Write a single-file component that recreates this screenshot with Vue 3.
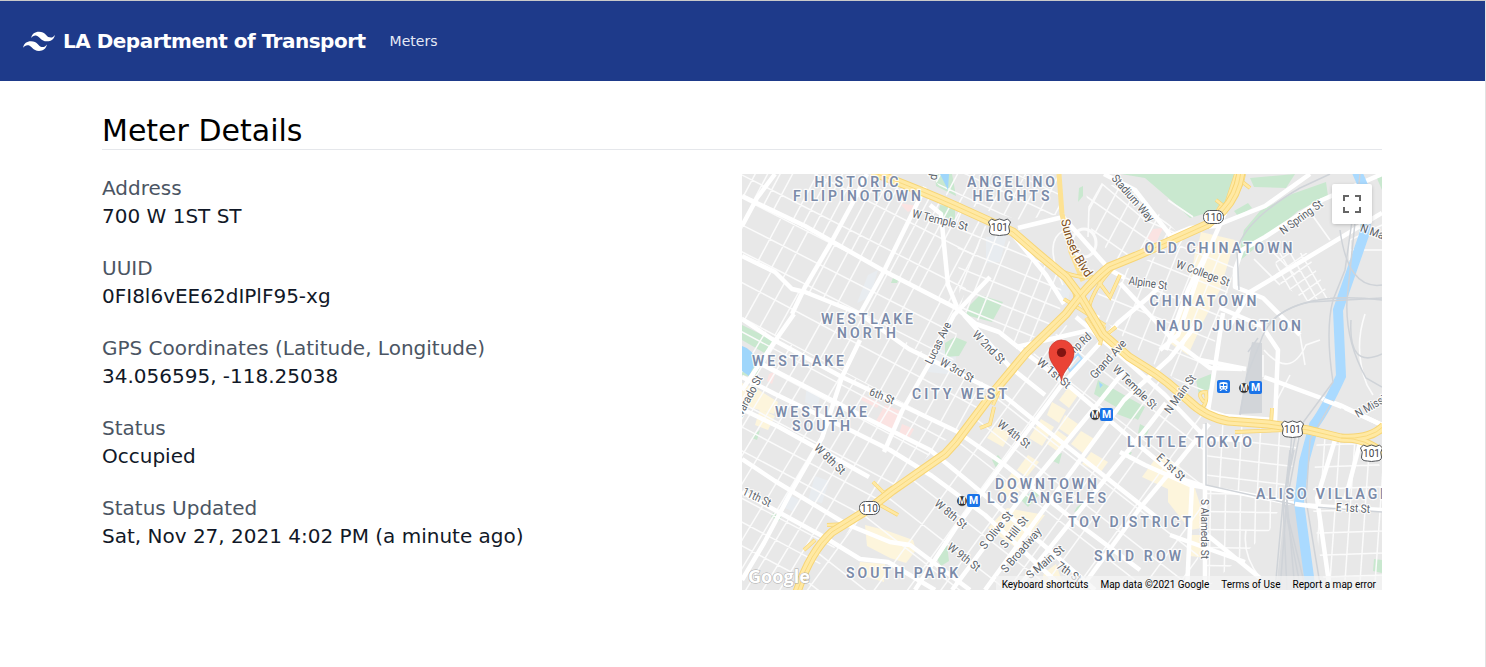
<script setup>
const details = [
  ['Address', '700 W 1ST ST'],
  ['UUID', '0FI8l6vEE62dIPlF95-xg'],
  ['GPS Coordinates (Latitude, Longitude)', '34.056595, -118.25038'],
  ['Status', 'Occupied'],
  ['Status Updated', 'Sat, Nov 27, 2021 4:02 PM (a minute ago)'],
]

// Parallel side streets around (cx, cy) at a given heading; skip leaves gaps in the grid.
function streets(cx, cy, angle, gap, count, len, skip = 0) {
  const a = (angle * Math.PI) / 180
  const dx = Math.cos(a), dy = Math.sin(a)
  let d = ''
  for (let i = -count; i <= count; i++) {
    if (skip && Math.abs(i * 7 + 3) % skip === 0) continue
    const x = cx - dy * gap * i, y = cy + dx * gap * i
    d += `M${(x - dx * len).toFixed(1)} ${(y - dy * len).toFixed(1)}L${(x + dx * len).toFixed(1)} ${(y + dy * len).toFixed(1)}`
  }
  return d
}

const zones = [
  { id: 'nw', shape: '742,174 872,174 956,208 985,225 960,308 742,197', lines: [[850, 230, 118, 11, 18, 200, 5], [850, 230, 27, 34, 7, 200, 0]] },
  { id: 'w', shape: '742,197 960,308 952,372 860,314 805,292 742,256', lines: [[850, 280, 118, 15, 13, 200, 4], [850, 280, 27, 24, 5, 200, 0]] },
  { id: 'wl', shape: '742,256 805,292 860,314 956,372 996,387 956,431 742,319', lines: [[850, 340, 119, 17, 14, 220, 4], [850, 340, 28, 31, 5, 220, 0]] },
  { id: 'sw', shape: '742,319 956,431 892,489 869,509 797,590 742,590', lines: [[830, 450, 121, 14.5, 14, 260, 6], [830, 450, 28, 21, 10, 220, 4]] },
  { id: 'en', shape: '956,207 1062,275 1060,314 1020,350 960,308', lines: [[1000, 265, 112, 14, 8, 100, 4], [1000, 265, 22, 18, 6, 100, 0]] },
  { id: 'an', shape: '930,174 1060,174 1062,214 1020,220 950,200', lines: [[1000, 190, 118, 15, 8, 90, 0], [1000, 190, 25, 21, 4, 90, 0]] },
  { id: 'ch', shape: '1085,185 1130,185 1190,245 1120,262 1092,235', lines: [[1120, 220, 118, 16, 6, 90, 0], [1120, 220, 35, 24, 5, 90, 0]] },
  { id: 'ct', shape: '1100,280 1190,242 1240,250 1218,325 1205,400 1155,365 1095,312', lines: [[1180, 300, 112, 20, 8, 160, 0], [1180, 300, 22, 25, 8, 160, 0]] },
  { id: 'sp', shape: '1276,253 1307,253 1330,298 1310,303 1275,280', lines: [[1300, 270, 60, 9, 8, 70, 0], [1300, 270, 145, 10, 5, 70, 0]] },
  { id: 'dt', shape: '1066,325 1130,357 1208,417 1206,485 1195,590 800,590 815,550 869,509 945,452 996,387', lines: [[1050, 440, 126, 27, 11, 300, 4], [1050, 440, 38, 29, 11, 300, 4]] },
  { id: 'la', shape: '1208,424 1300,432 1285,502 1206,485', lines: [[1240, 460, 93, 19, 5, 80, 0], [1240, 460, 7, 19, 4, 80, 0]] },
  { id: 'ar', shape: '1205,488 1282,502 1270,530 1205,590', lines: [[1240, 530, 91, 15, 4, 100, 0], [1240, 530, 1, 18, 5, 80, 0]] },
  { id: 'al', shape: '1317,438 1370,446 1382,470 1382,590 1325,590 1312,502', lines: [[1350, 510, 94, 15, 5, 120, 0], [1350, 510, 358, 22, 5, 80, 0]] },
]
for (const z of zones) z.d = z.lines.map(l => streets(...l)).join('')

const parks = [
  '742,325 773,340 768,355 742,340', '742,348 760,365 757,378 742,375',
  '970,305 980,295 1003,302 992,322 966,315', '945,343 955,337 967,342 959,356 945,357',
  '940,205 955,207 955,220 938,215', '935,174 952,174 956,196 936,186',
  '1098,380 1145,407 1138,420 1094,394', '1125,401 1142,409 1133,420 1117,414',
  '1121,174 1242,174 1230,205 1210,212 1190,218 1173,202 1145,178',
  '1250,178 1295,174 1286,188 1254,187', '1326,182 1328,196 1298,211 1254,249 1237,263 1244,230 1260,211 1292,194',
  '1234,211 1248,203 1252,208 1238,216', '1079,188 1083,186 1083,196 1078,202',
  '1196,380 1211,374 1211,388 1199,395', '1021,500 1036,488 1041,493 1028,507',
  '992,460 998,455 1002,460 996,468', '1055,456 1062,453 1059,464 1053,461',
  '937,559 947,545 949,561 941,566', '773,513 781,517 779,521 771,517', '753,435 760,430 757,440 752,438',
  '893,278 899,279 897,283 891,283', '1374,559 1382,560 1382,573 1373,571', '1140,424 1149,429 1146,437 1138,433',
  '1077,507 1086,500 1080,510 1074,512', '1123,453 1132,452 1128,459', '1376,176 1382,176 1382,190',
]
const sand = [
  '1068,388 1078,395 1069,408 1059,400', '1052,402 1066,410 1059,423 1047,415', '1041,419 1054,427 1042,446 1029,438',
  '1065,415 1078,424 1070,436 1058,428', '1057,430 1068,438 1057,451 1046,443', '995,427 1011,433 1003,447 987,438',
  '1028,455 1039,462 1027,477 1017,470', '1081,431 1096,440 1084,454 1071,444', '1091,452 1108,462 1100,473 1082,464',
  '1013,471 1027,480 1011,502 998,493', '1007,508 1045,515 1032,532 1015,547 988,528', '1158,455 1180,465 1170,490 1142,477',
  '1168,470 1193,482 1207,527 1190,530 1168,502', '1191,535 1208,535 1207,558 1190,556',
  '865,525 885,530 913,540 916,550 906,563 890,558 867,546', '860,562 885,564 884,582 858,574', '1044,573 1056,564 1065,590 1040,587',
  '1201,232 1235,240 1220,290 1203,322 1188,355 1168,342 1188,290', '1196,247 1206,240 1199,266 1192,270',
  '742,383 757,389 778,402 774,414 742,405', '760,409 775,416 768,430 755,425',
]
const pinks = ['1153,229 1163,228 1156,243 1147,239', '899,203 918,206 908,212', '863,395 880,403 877,408 861,400', '885,405 903,412 893,429 876,421', '902,424 914,429 909,438 899,434', '769,374 776,371 772,384 767,381']
const blues = ['930,345 956,355 955,375 928,372', '868,275 878,270 870,297 857,303', '986,237 1007,235 1000,262 986,263', '815,476 829,481 822,503 808,500', '1062,279 1072,282 1068,300 1057,297', '786,493 799,500 794,512 780,506', '807,385 821,393 817,409 805,402']

const majors = [
  'M742 196L805 226L884 271L956 308L976 324L999 332L1023 351L1069 386L1129 437L1178 478L1206 487',
  'M742 256L775 272L792 289L805 292L860 314L909 349L956 372L1003 395L1040 425L1103 475L1160 520',
  'M742 319L772 339L842 377L895 402L956 431L1005 465L1080 525L1140 570',
  'M762 364L785 376L872 421L930 450L969 482L1047 548L1095 590', 'M742 377L775 394L852 431L890 450L932 476L985 515L1065 590',
  'M742 409L779 427L835 458L869 477', 'M742 459L775 481L846 524L890 542L910 545L970 590', 'M742 492L824 537L860 559L888 562L935 590',
  'M742 580L764 543L790 494L822 438L842 377L860 340', 'M792 314L805 287L832 241L852 204L867 174', 'M860 314L884 271L912 214L925 187', 'M742 226L757 198L775 174', 'M742 390L775 341L794 314',
  'M884 452L902 411L929 364L954 315L990 277', 'M915 590L955 529L999 469L1060 387L1118 323L1150 296L1163 283',
  'M952 590L1030 486L1100 401L1124 371', 'M985 590L1055 494L1124 400L1170 358L1200 320', 'M1016 590L1085 504L1149 425L1166 403', 'M1080 590L1140 508L1180 460L1209 424',
  'M1076 317L1120 355L1165 395L1207 439L1250 440', 'M964 315L1010 367L1045 395', 'M1016 347L1090 330L1098 315', 'M930 205L941 214L948 285L957 307', 'M1009 230L1046 275L1064 304', 'M1018 228L1063 217L1110 270L1125 278', 'M1120 283L1173 340L1210 368L1242 369',
  'M1104 174L1135 190L1170 235', 'M1168 237L1190 228L1215 226L1265 206L1310 174', 'M1382 174L1322 200L1265 237L1242 250L1235 270L1235 287L1263 298L1300 335', 'M1382 213L1250 292L1230 325', 'M1207 252L1188 290L1166 350', 'M1225 213L1200 270L1178 335L1160 350',
  'M1223 313L1216 360L1208 411L1224 416L1275 420L1278 350L1262 326L1220 308', 'M1264 377L1340 405L1382 425', 'M1200 360L1246 369',
  'M1120 452L1145 465L1190 485L1245 494L1300 505L1382 510', 'M1205 424L1205 590', 'M1192 484L1187 590', 'M1206 534L1260 578', 'M1170 535L1245 562', 'M1335 440L1317 498L1330 590', 'M1360 443L1345 500', 'M1382 425L1345 408',
]
const freeways = [
  { d: 'M872 172Q920 190 956 206L989 221L1013 232L1036 252L1066 277L1081 297L1103 334L1129 357L1156 374L1168 383L1188 400Q1205 417 1228 421L1268 424L1308 430L1341 438Q1370 440 1384 426', w: 9 },
  { d: 'M1341 438Q1366 438 1384 454', w: 8 },
  { d: 'M1241 172Q1238 195 1223 211L1208 224L1168 242L1136 256L1109 267Q1090 282 1066 314L1026 353L996 389L956 442L945 454L892 491L869 509L832 532Q810 552 797 592', w: 9 },
]
const ramps = [
  'M1045 263Q1074 280 1097 277', 'M1068 280Q1082 302 1070 310', 'M1088 314Q1090 292 1113 268', 'M1064 299L1105 325', 'M1098 281L1110 297L1120 275', 'M1086 318L1100 340L1116 327', 'M1100 345L1104 326', 'M1244 174Q1240 198 1220 207L1207 228', 'M1236 174L1225 207L1216 200', 'M1240 180L1250 188', 'M1272 408L1271 425', 'M1204 402Q1195 392 1206 392Q1208 405 1200 409',
  'M873 482L884 493L893 487', 'M880 505L898 515', 'M827 525L849 524', 'M815 540L804 550', 'M994 407L990 424L980 428', 'M1009 370L993 405', 'M1035 345L1060 322', 'M1235 432L1285 430',
]
const water = 'M1357 172L1364 188Q1370 204 1364 235L1338 310L1341 376Q1326 409 1314 425L1304 462L1299 502L1311 592'
const rails = [
  'M1239 290L1237 250Q1245 220 1300 188L1330 174', 'M1382 298L1310 302Q1270 310 1260 343L1247 375L1240 415', 'M1360 174L1347 300Q1345 340 1366 378L1382 387', 'M1355 200L1345 270L1333 300Q1325 330 1333 382L1296 432L1283 502L1275 590',
  'M1340 230Q1348 290 1382 285', 'M1351 320Q1348 370 1382 354', 'M1292 432L1280 590', 'M1300 432L1287 500L1295 590', 'M1290 450L1284 502L1301 590', 'M1294 450L1283 502L1287 590', 'M1285 505L1306 590', 'M1310 440L1306 500L1321 590', 'M1333 400L1310 440', 'M1206 423L1206 485L1300 506L1382 512', 'M1248 352L1258 338', 'M1268 324Q1300 290 1382 300',
]

const areas = [
  [856.5, 187, 'HISTORIC', 84], [857, 201, 'FILIPINOTOWN', 128], [1011, 187, 'ANGELINO', 88], [1011, 201, 'HEIGHTS', 77], [1218.5, 253, 'OLD CHINATOWN', 148], [1203, 306, 'CHINATOWN', 107], [1228.5, 331, 'NAUD JUNCTION', 145],
  [867, 324, 'WESTLAKE', 92], [866.5, 338, 'NORTH', 59], [798, 366, 'WESTLAKE', 92], [959.5, 399, 'CITY WEST', 95], [821, 417, 'WESTLAKE', 92], [821, 431, 'SOUTH', 58], [1189.5, 447, 'LITTLE TOKYO', 125], [1046, 489, 'DOWNTOWN', 102], [1046.5, 503, 'LOS ANGELES', 119], [1129.5, 527, 'TOY DISTRICT', 123], [1137.5, 561, 'SKID ROW', 87], [902, 578, 'SOUTH PARK', 112], [1322, 499, 'ALISO VILLAGE', 132],
]
const roads = [
  [940, 220, 14, 'W Temple St', 57], [1133, 198, 49, 'Stadium Way', 58], [1301, 217, -36, 'N Spring St', 50], [1203, 273, 20, 'W College St', 56], [1148, 283, 8, 'Alpine St', 39], [938, 343, -64, 'Lucas Ave', 45], [989, 347, 45, 'W 2nd St', 41], [957, 370, 30, 'W 3rd St', 37], [882, 396, 22, '6th St', 26], [1054, 373, 40, 'W 1st St', 40], [1076, 347, -42, 'Temp Rd', 36], [1108, 359, -48, 'Grand Ave', 48], [1135, 387, 45, 'W Temple St', 57], [1180, 394, -54, 'N Main St', 45], [1014, 434, 38, 'W 4th St', 38], [1171, 467, 42, 'E 1st St', 34], [1353, 508, 3, 'E 1st St', 34], [830, 459, 44, 'W 8th St', 38], [757, 497, 25, '11th St', 30], [951, 514, 40, 'W 8th St', 38], [964, 557, 38, 'W 9th St', 38], [996, 530, -51, 'S Olive St', 45], [1014, 532, -51, 'S Hill St', 37], [1021, 550, -49, 'S Broadway', 55], [1045, 562, -40, 'S Main St', 45], [1069, 572, 35, '7th St', 27], [1205, 529, 90, 'S Alameda St', 60], [747, 399, -62, 'Alvarado St', 52], [1381, 400, -30, 'N Mission Rd', 58], [1382, 235, 20, 'N Main St', 45], [933, 177, -82, 'd', 6],
]
const shields = [[999.5, 227, '101'], [1292.5, 429, '101'], [1371.5, 453, '101']]
const ovals = [[1213.5, 217], [869.5, 508]]
const metros = [[1106.5, 414.5], [1255.5, 387.5], [973.5, 500.5]]
</script>

<template>
  <div class="page">
    <header class="navbar">
      <svg class="logo" viewBox="0 0 54 54" aria-hidden="true">
        <path d="M13.5 22.1c1.8-7.2 6.3-10.8 13.5-10.8 10.8 0 12.15 8.1 17.55 9.45 3.6.9 6.75-.45 9.45-4.05-1.8 7.2-6.3 10.8-13.5 10.8-10.8 0-12.15-8.1-17.55-9.45-3.6-.9-6.75.45-9.45 4.05zM0 38.3c1.8-7.2 6.3-10.8 13.5-10.8 10.8 0 12.15 8.1 17.55 9.45 3.6.9 6.75-.45 9.45-4.05-1.8 7.2-6.3 10.8-13.5 10.8-10.8 0-12.15-8.1-17.55-9.45-3.6-.9-6.75.45-9.45 4.05z" />
      </svg>
      <span class="brand">LA Department of Transport</span>
      <a class="link">Meters</a>
    </header>
    <main>
      <h1>Meter Details</h1>
      <div class="columns">
        <dl>
          <div v-for="[label, value] in details" :key="label" class="detail">
            <dt>{{ label }}</dt>
            <dd>{{ value }}</dd>
          </div>
        </dl>
        <div class="map">
          <svg class="canvas" viewBox="742 174 640 416">
            <defs>
              <clipPath v-for="z in zones" :id="z.id" :key="z.id"><polygon :points="z.shape" /></clipPath>
            </defs>
            <rect x="742" y="174" width="640" height="416" fill="#e8e8e8" />
            <polygon v-for="p in blues" :key="p" :points="p" fill="#e8ecf0" />
            <polygon v-for="p in sand" :key="p" :points="p" fill="#fdf5dc" />
            <polygon v-for="p in pinks" :key="p" :points="p" fill="#fbe3e2" />
            <polygon v-for="p in parks" :key="p" :points="p" fill="#c9e8cf" />
            <g class="minor">
              <path v-for="z in zones" :key="z.id" :d="z.d" :clip-path="`url(#${z.id})`" />
              <ellipse cx="1084" cy="243" rx="12" ry="14" stroke-width="3" />
              <path d="M1088 237L1089 207L1102 184L1145 220L1180 235M1063 285Q1042 240 1065 230M1168 200L1193 217M1300 335L1305 365M1263 355L1263 377M1264 350Q1290 380 1306 345L1320 340M1290 375L1277 400M1365 314Q1353 350 1367 385L1373 395M1246 530Q1242 555 1260 578M1350 260V240L1382 225M1350 250H1382M1254 259L1280 285M1269 248L1295 275M1310 212L1330 240" stroke-width="1.6" />
            </g>
            <path d="M742 346Q753 349 756 362L749 376L742 371ZM940 174H949L948 190ZM1099 382L1103 385L1100 388Z" fill="#9fd6fb" />
            <path d="M1067 366L1078 354L1082 359L1070 371Z" fill="none" stroke="#acdcff" stroke-width="2" />
            <g class="major"><path v-for="d in majors" :key="d" :d="d" /></g>
            <path d="M1252 342L1262 343L1262 413L1239 414Z" fill="#d2d5d9" />
            <path d="M1285 505H1295L1313 590H1276Z" fill="#d9dbde" />
            <path :d="water" class="water" />
            <g class="rails"><path v-for="d in rails" :key="d" :d="d" /></g>
            <g class="major"><path d="M1324 400L1342 407M1295 504L1318 507" /></g>
            <path d="M1059 174L1062 214L1071 252L1083 281" fill="none" stroke="#fde293" stroke-width="5" />
            <g class="ramps edge"><path v-for="d in ramps" :key="d" :d="d" /></g>
            <g class="ramps"><path v-for="d in ramps" :key="d" :d="d" /></g>
            <g fill="none">
              <path v-for="f in freeways" :key="f.d" :d="f.d" stroke="#f7d575" :stroke-width="f.w" />
              <path v-for="f in freeways" :key="'i' + f.d" :d="f.d" stroke="#ffe9a4" :stroke-width="f.w - 2" />
              <path v-for="f in freeways" :key="'c' + f.d" :d="f.d" stroke="#f7d575" stroke-width=".8" />
            </g>
            <g class="area">
              <text v-for="[x, y, label, width] in areas" :key="label + x" :x="x" :y="y" :textLength="width" lengthAdjust="spacing">{{ label }}</text>
            </g>
            <g class="road">
              <text v-for="[x, y, angle, label, width] in roads" :key="label + x" :transform="`translate(${x} ${y}) rotate(${angle})`" y="4" :textLength="width" lengthAdjust="spacingAndGlyphs">{{ label }}</text>
            </g>
            <path id="sunset" d="M1061 220Q1067 253 1088 280" fill="none" />
            <text class="sunset"><textPath href="#sunset" textLength="64">Sunset Blvd</textPath></text>
            <g class="shield">
              <g v-for="[x, y, label] in shields" :key="x" :transform="`translate(${x} ${y})`">
                <path d="M-8-8Q-5-5 0-8Q5-5 8-8L11-5Q8-1 10 4Q10 8 4 8Q0 9-4 8Q-10 8-10 4Q-8-1-11-5Z" />
                <text y="4">{{ label }}</text>
              </g>
              <g v-for="[x, y] in ovals" :key="x" :transform="`translate(${x} ${y})`">
                <rect x="-10" y="-6.5" width="20" height="13" rx="6" />
                <text y="4">110</text>
              </g>
            </g>
            <g v-for="[x, y] in metros" :key="x" :transform="`translate(${x} ${y})`" class="metro">
              <circle cx="-11.5" cy=".5" r="5.2" fill="#2c2c2c" stroke="#fff" stroke-width=".5" />
              <text x="-11.5" y="3.5" font-size="8.5">M</text>
              <rect x="-6.5" y="-6.5" width="13" height="13" rx="2" fill="#1a73e8" />
              <text y="3.8" font-size="10.5">M</text>
            </g>
            <g transform="translate(1223.5 386.5)">
              <rect x="-6.5" y="-6.5" width="13" height="13" rx="2" fill="#1a73e8" />
              <path d="M-4-3Q-4-4.5 0-4.5T4-3V2L2.5 3L4 4.5H2.5L1.5 3H-1.5L-2.5 4.5H-4L-2.5 3L-4 2ZM-3-2.5V-.5H-.5V-2.5ZM.5-2.5V-.5H3V-2.5Z" fill="#fff" fill-rule="evenodd" />
              <path d="M-2.5 1.3H-1M1 1.3H2.5" stroke="#1a73e8" stroke-width="1.2" />
            </g>
            <path d="M1061.5 381C1060 369 1049 365 1049 352.5A12.5 12.5 0 0 1 1074 352.5C1074 365 1063 369 1061.5 381Z" fill="#ea4335" stroke="#c5352b" stroke-width=".7" />
            <circle cx="1061.5" cy="352.5" r="4.6" fill="#811411" />
            <text class="google" x="748" y="583" textLength="62" lengthAdjust="spacingAndGlyphs">Google</text>
          </svg>
          <button class="fullscreen" aria-label="Toggle fullscreen view">
            <svg viewBox="0 0 18 18" width="18" height="18"><path d="M0 0v6h2V2h4V0H0zm16 0h-4v2h4v4h2V0h-2zm0 16h-4v2h6v-6h-2v4zM2 12H0v6h6v-2H2v-4z" fill="#666" /></svg>
          </button>
          <div class="credits"><span>Keyboard shortcuts</span><span>Map data ©2021 Google</span><span>Terms of Use</span><span>Report a map error</span></div>
        </div>
      </div>
    </main>
  </div>
</template>

<style>
body { margin: 0; background: #fff; }
</style>

<style scoped>
.page { box-sizing: border-box; height: 667px; overflow: hidden; border-top: 1px solid #c9c9c9; border-right: 1px solid #e2e2e2; font-family: "DejaVu Sans", sans-serif; }
.navbar { display: flex; align-items: center; box-sizing: border-box; height: 80px; padding: 0 23px; background: #1e3a8a; color: #fff; }
.logo { width: 32px; height: 32px; margin-right: 8px; fill: #fff; }
.brand { font-size: 20px; font-weight: 700; letter-spacing: -.5px; line-height: 28px; }
.link { margin-left: 24px; font-size: 14px; color: #e5e9f5; }
main { width: 1280px; margin: 0 0 0 102px; padding-top: 31px; }
h1 { margin: 0; border-bottom: 1px solid #e5e7eb; font-size: 30px; font-weight: 400; line-height: 37px; color: #000; }
.columns { display: grid; grid-template-columns: 640px 640px; padding-top: 24px; }
dl { margin: 0; }
.detail { margin-bottom: 24px; font-size: 20px; line-height: 28px; }
dt { color: #4b5563; }
dd { margin: 0; color: #111827; }
.map { position: relative; height: 416px; overflow: hidden; }
.canvas { display: block; width: 640px; height: 416px; font-family: Roboto, sans-serif; }
.minor { fill: none; stroke: #fbfbfb; stroke-width: 1.5; }
.major { fill: none; stroke: #fff; stroke-width: 4.5; stroke-linejoin: round; }
.water { fill: none; stroke: #aadaff; stroke-width: 10; }
.rails { fill: none; stroke: #cfd3d8; stroke-width: 1.5; }
.ramps { fill: none; stroke: #ffe9a4; stroke-width: 2.5; }
.ramps.edge { stroke: #f7d575; stroke-width: 3.8; }
.area text, .road text, .sunset { paint-order: stroke; stroke: #fff; stroke-opacity: .85; stroke-width: 2.5px; stroke-linejoin: round; }
.area text { font-size: 14px; font-weight: 600; fill: #7b8ba9; text-anchor: middle; }
.road text { font-size: 11.5px; fill: #596067; text-anchor: middle; }
.sunset { font-size: 12.5px; fill: #805020; }
.shield path, .shield rect { fill: #fff; stroke: #505357; stroke-width: 1; }
.shield text { font-size: 10px; fill: #3f4245; text-anchor: middle; }
.metro text { fill: #fff; font-weight: 700; text-anchor: middle; }
.google { font-family: "Open Sans", sans-serif; font-size: 18px; font-weight: 700; fill: #fff; paint-order: stroke; stroke: #aaa; stroke-width: 1px; }
.fullscreen { position: absolute; top: 10px; right: 10px; display: grid; place-items: center; width: 40px; height: 40px; padding: 0; border: 0; border-radius: 2px; background: #fff; box-shadow: 0 1px 4px -1px rgba(0, 0, 0, .3); }
.credits { position: absolute; right: 0; bottom: 0; display: flex; height: 14px; background: rgba(245, 245, 245, .7); font: 10px/17px Roboto, sans-serif; color: #000; white-space: nowrap; }
.credits span { padding: 0 6px; }
</style>
